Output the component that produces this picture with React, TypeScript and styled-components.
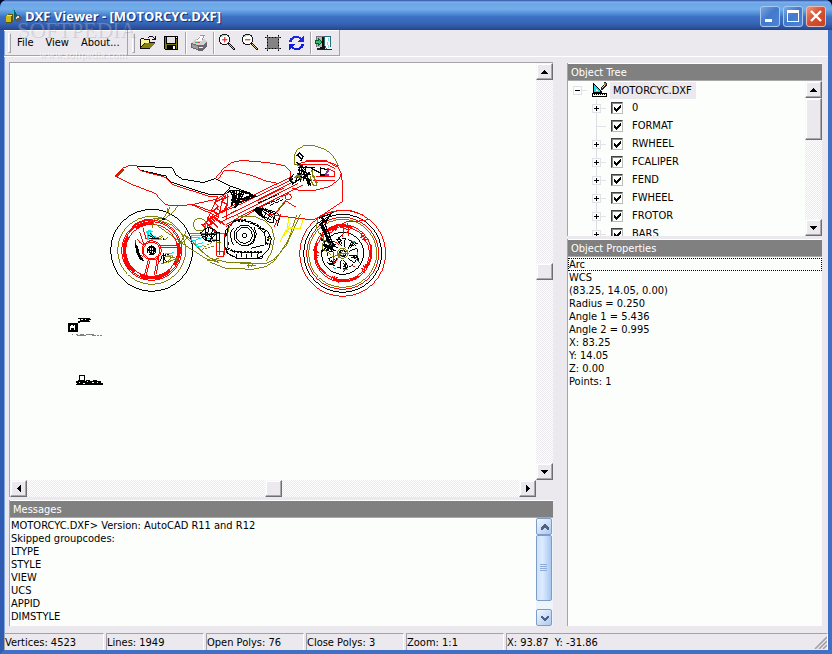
import React from "react";
import styled, { createGlobalStyle, css } from "styled-components";

const FACE = "#ebe9ed";
const PAPER = "#fcfefc";
const SHADOW = "#a5a2a8";

const GlobalStyle = createGlobalStyle`
  * { box-sizing: border-box; }
  body {
    margin: 0;
    background: #04082e;
    color: #000;
    font: 11px/13px "DejaVu Sans Condensed", "DejaVu Sans", sans-serif;
  }
  button { font: inherit; color: inherit; padding: 0; margin: 0; border: 0; background: none; }
  ul { list-style: none; margin: 0; padding: 0; }
  h1, h2 { margin: 0; font: inherit; }
  svg { display: block; flex: none; }
`;

const Window = styled.div`
  position: relative;
  display: flex;
  flex-direction: column;
  height: 100vh;
  min-height: 480px;
  border: 4px solid #3f70c6;
  border-top: 0;
  border-left-color: #2f5bb0;
  border-radius: 7px 7px 0 0;
  background: ${FACE};
  box-shadow: inset 1px 0 #7fa6e2;
`;

const TitleBar = styled.header`
  display: flex;
  align-items: center;
  gap: 3px;
  height: 30px;
  margin: 0 -4px;
  padding: 2px 6px 0 6px;
  flex: none;
  border-radius: 7px 7px 0 0;
  background: linear-gradient(#2a4f9e 0, #7fb0ec 2px, #6ba6e8 4px, #74aeea 9px, #4f8cd6 14px, #3c70c2 17px, #3766b8 23px, #2b509c 28px, #23438c 30px);
`;

const Title = styled.h1`
  flex: 1;
  color: #fff;
  font: bold 13px/18px "Open Sans", "Noto Sans", sans-serif;
  text-shadow: 1px 1px #14306e;
  white-space: nowrap;
`;

const WindowButtons = styled.div`
  display: flex;
  gap: 3px;
`;

const WindowButton = styled.button<{ $close?: boolean }>`
  display: grid;
  place-items: center;
  width: 20px;
  height: 21px;
  border: 1px solid ${(p) => (p.$close ? "#e8bcb4" : "#a9c8ee")};
  border-radius: 3px;
  background: ${(p) =>
    p.$close
      ? "linear-gradient(135deg, #ea9a80, #d85232 45%, #c2421f)"
      : "linear-gradient(135deg, #7aa8e4, #4379cb 45%, #4c84d2)"};
`;

const ToolRow = styled.div`
  display: flex;
  flex: none;
  height: 27px;
  border-bottom: 1px solid #fff;
`;

const Band = styled.div`
  display: flex;
  align-items: center;
  height: 26px;
  padding: 0 1px 0 4px;
  border-right: 1px solid ${SHADOW};
  border-bottom: 1px solid ${SHADOW};
  box-shadow: inset 0 1px #fff;
`;

const Grip = styled.span`
  width: 3px;
  height: 20px;
  border: 1px solid #fff;
  border-right-color: ${SHADOW};
  border-bottom-color: ${SHADOW};
`;

const MenuButton = styled.button`
  height: 22px;
  padding: 0 6px;
  white-space: nowrap;
`;

const Menu = styled.nav`
  display: flex;
`;

const ToolButton = styled.button`
  display: grid;
  place-items: center;
  width: 23px;
  height: 22px;
`;

const ToolGroup = styled.div`
  display: flex;
  padding: 0 2px;
  & + & {
    border-left: 1px solid ${SHADOW};
    box-shadow: inset 1px 0 #fff;
  }
`;

const Workspace = styled.main`
  display: grid;
  grid-template-columns: minmax(0, 1fr) 255px;
  gap: 14px;
  flex: 1;
  min-height: 0;
  padding: 5px 6px 7px 5px;
`;

const LeftColumn = styled.div`
  display: flex;
  flex-direction: column;
  gap: 3px;
  min-height: 0;
`;

const RightColumn = styled.div`
  display: flex;
  flex-direction: column;
  gap: 3px;
  min-height: 0;
  padding-top: 1px;
`;

const Viewport = styled.section`
  display: grid;
  grid-template-columns: minmax(0, 1fr) 17px;
  grid-template-rows: minmax(0, 1fr) 17px;
  flex: 1;
  min-height: 0;
  border-left: 1px solid ${SHADOW};
  border-top: 1px solid ${SHADOW};
`;

const Canvas = styled.div`
  overflow: hidden;
  background: ${PAPER};
`;

const Panel = styled.section<{ $size?: number }>`
  display: flex;
  flex-direction: column;
  min-height: 0;
  flex: ${(p) => (p.$size ? `0 0 ${p.$size}px` : "1")};
  border-left: 1px solid ${SHADOW};
`;

const PanelTitle = styled.h2`
  flex: none;
  height: 18px;
  padding: 0 3px;
  border-top: 1px solid #fff;
  border-bottom: 1px solid #a8a8a8;
  background: #808080;
  color: #fff;
  line-height: 17px;
`;

const PanelBody = styled.div`
  display: flex;
  flex: 1;
  min-height: 0;
  background: ${PAPER};
`;

const Lines = styled.ul`
  flex: 1;
  min-width: 0;
  padding-top: 1px;
  overflow: hidden;
`;

const Line = styled.li<{ $focused?: boolean }>`
  padding: 0 1px;
  line-height: 13px;
  white-space: pre;
  ${(p) => p.$focused && css`outline: 1px dotted #000; outline-offset: -1px;`}
`;

const raised = css`
  border: 1px solid #f8f8fa;
  border-right-color: #6e6e72;
  border-bottom-color: #6e6e72;
  box-shadow: inset -1px -1px #a9a8ad, inset 1px 1px #fff;
  background: ${FACE};
`;

const ScrollTrack = styled.div<{ $across?: boolean }>`
  display: flex;
  flex-direction: ${(p) => (p.$across ? "row" : "column")};
  ${(p) => (p.$across ? "height: 17px;" : "width: 17px;")}
  flex: none;
  min-height: 0;
  background: repeating-conic-gradient(#ebe9ed 0 25%, #fff 0 50%) 0 0 / 2px 2px;
`;

const ScrollButton = styled.button`
  display: grid;
  place-items: center;
  width: 17px;
  height: 17px;
  flex: none;
  ${raised}
`;

const Space = styled.div<{ $grow: number }>`
  flex: ${(p) => p.$grow} 1 0;
`;

const Thumb = styled.div<{ $length?: number }>`
  min-width: 17px;
  height: ${(p) => p.$length ?? 17}px;
  flex: none;
  ${raised}
`;

const LunaTrack = styled.div`
  display: flex;
  flex-direction: column;
  width: 17px;
  flex: none;
  background: #eef4fc;
`;

const LunaButton = styled.button`
  display: grid;
  place-items: center;
  width: 16px;
  height: 17px;
  border: 1px solid #7d9dc8;
  border-radius: 2px;
  background: linear-gradient(135deg, #f0f7ff, #adc8ee);
`;

const LunaThumb = styled.div`
  display: grid;
  place-items: center;
  width: 16px;
  flex: 66 1 0;
  border: 1px solid #7d9dc8;
  border-radius: 2px;
  background: linear-gradient(90deg, #cfe3fa, #dcebff 40%, #a9c6ee);
`;

const Tree = styled.ul`
  flex: 1;
  min-width: 0;
  overflow: hidden;
`;

const TreeRoot = styled.li`
  display: flex;
  align-items: center;
  height: 18px;
  padding-left: 5px;
`;

const TreeItem = styled.li`
  display: flex;
  align-items: center;
  height: 18px;
  padding-left: 24px;
`;

const Expander = styled.button`
  display: block;
  width: 19px;
  height: 18px;
  flex: none;
`;

const RootName = styled.span`
  margin-left: 2px;
  padding: 0 4px 0 3px;
  background: ${FACE};
  line-height: 17px;
`;

const CheckLabel = styled.label`
  display: grid;
  grid-template-columns: 12px auto;
  align-items: center;
  column-gap: 9px;
  line-height: 18px;
`;

const Check = styled.input`
  grid-area: 1 / 1;
  appearance: none;
  width: 12px;
  height: 12px;
  margin: 0;
  border: 1px solid #404040;
  border-right-color: #bbb;
  border-bottom-color: #bbb;
  box-shadow: inset 1px 1px #888;
  background: #fff;
  & + svg { visibility: hidden; grid-area: 1 / 1; pointer-events: none; }
  &:checked + svg { visibility: visible; }
`;

const StatusBar = styled.footer`
  display: grid;
  grid-template-columns: 100px repeat(4, 98px) minmax(0, 1fr);
  gap: 2px;
  flex: none;
  height: 17px;
`;

const StatusCell = styled.div`
  display: flex;
  justify-content: space-between;
  align-items: center;
  border-top: 1px solid ${SHADOW};
  border-left: 1px solid ${SHADOW};
  border-right: 1px solid #fff;
  white-space: pre;
`;

const Watermark = styled.div`
  position: absolute;
  top: 18px;
  left: 13px;
  color: rgba(255, 255, 255, 0.22);
  font: 22px/24px "Liberation Serif", serif;
  text-shadow: 1px 1px rgba(90, 90, 120, 0.2);
  pointer-events: none;
`;

const WatermarkUrl = styled.div`
  padding-left: 22px;
  color: rgba(255, 255, 255, 0.6);
  font: 11px/24px "Liberation Serif", serif;
`;

const Pix = ({ w, h, children }: { w: number; h: number; children: React.ReactNode }) => (
  <svg width={w} height={h} viewBox={`0 0 ${w} ${h}`} shapeRendering="crispEdges" aria-hidden="true">
    {children}
  </svg>
);

const AppIcon = () => (
  <Pix w={16} h={16}>
    <path d="M7 0h1v2h1v2h1v2h1v3h1v2h-2v1H6v-1H4V7h1V4h1V2h1z" fill="#22bfd4" />
    <path d="M8 2h1v2h1v2h1v3h1v2h-2v1H8z" fill="#075e78" />
    <path d="M0 8l2-2h5v7l-1 2H0z" fill="#5e5600" />
    <path d="M0 8h5v6H0z" fill="#d0bc18" />
    <path d="M1 7h5v1H1z" fill="#f4e964" />
    <path d="M11 7h3v1h1v1h1v3h-1v1h-1v1h-4v-1H9V9h1V8h1z" fill="#5a5a5a" />
    <path d="M11 8h2v2h-2v1h-1V9h1z" fill="#ddd" />
  </Pix>
);

const OpenIcon = () => (
  <Pix w={18} h={16}>
    <path d="M1 13V4h1V3h3v1h6v3h5v1h-1v1h-1v1h-1v1h-1v1h-1v2H1z" fill="#111" />
    <path d="M2 4h3v1h5v3H5v1H4v1H3v1H2z" fill="#fff49a" />
    <path d="M3 12v-1h1v-1h1V9h1V8h10v1h-1v1h-1v1h-1v1h-1v1H2v-1z" fill="#858211" />
    <path d="M9 2h1V1h4v1h1v1h1V1h1v4h-4V4h2V3h-1V2h-4v1H9z" fill="#111" />
  </Pix>
);

const SaveIcon = () => (
  <Pix w={16} h={16}>
    <path d="M1 1h14v14H2v-1H1z" fill="#000" />
    <path d="M2 2h1v7h10V4h1v10H2z" fill="#77750b" />
    <path d="M4 2h8v6H4z" fill="#e2e0e5" />
    <path d="M13 2h1v1h-1z" fill="#fff" />
    <path d="M4 10h9v4H4z" fill="#000" />
    <path d="M10 11h2v3h-2z" fill="#fff" />
  </Pix>
);

const PrintIcon = () => (
  <Pix w={18} h={17}>
    <path d="M1 9l5-4h8l3 2v5l-4 4H8l-7-3z" fill="#9d9da0" />
    <path d="M1 9l5-4h8l3 2-4 4H8z" fill="#d1d1d5" />
    <path d="M8 11h5l4-4v5l-4 4H8z" fill="#69696f" />
    <path d="M7 5l3-4h5v1l-3 5H6z" fill="#fff" />
    <path d="M7 5h1V4h1V3h1V1h5v1h-1v2h-1v2h-1V4h1V2h-3v2H9v1H8v1H7z" fill="#97979c" />
    <path d="M9 13h4v1H9z" fill="#eee" />
    <path d="M1 9l7 3v4l-7-3zM8 16h5" fill="none" stroke="#666" />
    <path d="M5 8h3v1H5z" fill="#3cb848" />
    <path d="M8 8h2v1H8z" fill="#ef4428" />
  </Pix>
);

const ZoomIcon = ({ plus }: { plus?: boolean }) => (
  <Pix w={18} h={17}>
    <path d="M4 0h5v1h2v2h1v5h-1v2H9v1H4v-1H2V8H1V3h1V1h2z" fill="#171717" />
    <path d="M4 1h5v1h1v1h1v5h-1v1H9v1H4V9H3V8H2V3h1V2h1z" fill="#fff" />
    <path d="M4 1h4v1H5v1H3V2h1z" fill="#a9dce7" />
    <path d={plus ? "M6 3h1v2h2v1H7v2H6V6H4V5h2z" : "M4 5h5v1H4z"} fill="#e92424" stroke="#f46a6a" strokeWidth="0.5" />
    <path d="M10 9h2v1h1v1h1v1h1v1h1v1h1v2h-2v-1h-1v-1h-1v-1h-1v-1h-1v-1h-1z" fill="#111" />
    <path d="M11 10h1v1h1v1h1v1h1v1h1v1h-1v-1h-1v-1h-1v-1h-1v-1h-1z" fill="#ddc873" />
  </Pix>
);

const ExtentsIcon = () => (
  <Pix w={16} h={16}>
    <path d="M3 3h10v10H3z" fill="#848484" />
    <path d="M2 1h1v1h10V1h1v1h1v1h-1v10h1v1h-1v1h-1v-1H3v1H2v-1H1v-1h1V3H1V2h1z M3 3v10h10V3z" fill="#555" fillRule="evenodd" />
    <path d="M2 0h1v1H2zM13 0h1v1h-1zM0 2h1v1H0zM15 2h1v1h-1zM0 13h1v1H0zM15 13h1v1h-1zM2 15h1v1H2zM13 15h1v1h-1zM4 2h1v1H4zM7 2h1v1H7zM10 2h1v1h-1zM4 13h1v1H4zM7 13h1v1H7zM10 13h1v1h-1zM2 4h1v1H2zM2 7h1v1H2zM2 10h1v1H2zM13 4h1v1h-1zM13 7h1v1h-1zM13 10h1v1h-1z" fill="#000" />
  </Pix>
);

const RefreshIcon = () => (
  <Pix w={17} h={16}>
    <path d="M1 7V5h1V3h2V2h1V1h6v1h2v1h1V2h1V1h1v6h-6V6h1V5h1V4h-1V3H6v1H5v1H4v2z" fill="#1b27e2" />
    <path d="M16 9v2h-1v2h-2v1h-1v1H6v-1H4v-1H3v1H2v1H1V9h6v1H6v1H5v1h1v1h5v-1h1v-1h1V9z" fill="#111bda" />
  </Pix>
);

const ExitIcon = () => (
  <Pix w={18} h={16}>
    <path d="M1 1h10v1H2v10H1z" fill="#77747a" />
    <path d="M2 2h7v10H2z" fill="#b9b7bd" />
    <path d="M7 2h3v12H5v-2h2z" fill="#111" />
    <path d="M10 1h5v11l1 2h-4l-2-3z" fill="#fff" />
    <path d="M9 1h7v1H9zM15 2h1v10h-1zM9 2h1v9H9zM10 11h1v2h-1zM11 13h1v1h-1z" fill="#286c76" />
    <path d="M13 3h1v3h-1zM12 7h1v3h-1zM13 10h1v3h-1z" fill="#76e2ee" />
    <path d="M0 5h3V3h1v1h1v1h1v1h1v2H6v1H5v1H4v1H3V9H0z" fill="#085c31" />
    <path d="M1 6h3V5h1v1h1v2H5v1H4V8H1z" fill="#24c85c" />
    <path d="M2 13h3v1h12v1H2z" fill="#222" />
  </Pix>
);

const DraftIcon = () => (
  <Pix w={16} h={16}>
    <path d="M1 1h1v1h1v1h1v1h1v1h1v1h1v1h1v1h1v1h1v2H1z" fill="#000" />
    <path d="M2 3h1v1h1v1h1v1h1v1h1v1h1v2H2z" fill="#18dce8" />
    <path d="M4 7h1v1h1v1H4z" fill="#fff" />
    <path d="M0 11h15v4H0z" fill="#000" />
    <path d="M1 12h13v2H1z" fill="#fff" />
    <path d="M2 12h1v1H2zM4 12h1v1H4zM6 12h1v1H6zM8 12h1v1H8zM10 12h1v1h-1zM12 12h1v1h-1z" fill="#000" />
    <path d="M8 8h1V5h1V4h1V3h1V0h2v1h1v3h-1v1h-1v1h-1v1h-1v1H8z" fill="#222" />
    <path d="M10 6V5h1V4h1V3h1v1h-1v1h-1v1z" fill="#f5e63c" />
    <path d="M12 1h2v2h-2z" fill="#a57b52" />
  </Pix>
);

const ARROWS = {
  up: "M3 0h1v1h1v1h1v1h1v1H0V3h1V2h1V1h1z",
  down: "M0 0h7v1H6v1H5v1H4v1H3V3H2V2H1V1H0z",
  left: "M4 0v7H3V6H2V5H1V4H0V3h1V2h1V1h1V0z",
  right: "M0 0h1v1h1v1h1v1h1v1H3v1H2v1H1v1H0z",
};

const Arrow = ({ to }: { to: keyof typeof ARROWS }) => {
  const vertical = to === "up" || to === "down";
  return (
    <Pix w={vertical ? 7 : 4} h={vertical ? 4 : 7}>
      <path d={ARROWS[to]} />
    </Pix>
  );
};

const TreeMark = ({ kind }: { kind: "plus" | "minus" | "none" }) => (
  <Pix w={19} h={18}>
    {kind !== "minus" && <path d="M4 0h1v18H4z" fill="#dddde4" />}
    <path d="M5 9h9v1H5z" fill="#e3e2e9" />
    {kind !== "none" && <path d="M0 5h9v9H0z" fill="#e2e1e8" />}
    {kind !== "none" && <path d="M1 6h7v7H1z" fill={PAPER} />}
    {kind !== "none" && <path d="M2 9h5v1H2z" />}
    {kind === "plus" && <path d="M4 7h1v5H4z" />}
  </Pix>
);

const RED = "#fd0404";
const OLIVE = "#80800a";
const INK = "#000";

const ring = (cx: number, cy: number, radii: number[], color: string, width = 3) =>
  radii.map((r) => <circle key={`${color}${r}`} cx={cx} cy={cy} r={r} stroke={color} strokeWidth={width} />);

const Blade = ({ cx, cy, turns, d, color, width = 3 }: { cx: number; cy: number; turns: number[]; d: string; color: string; width?: number }) => (
  <>
    {turns.map((t) => (
      <path key={t} d={d} stroke={color} strokeWidth={width} transform={`translate(${cx} ${cy}) rotate(${t})`} />
    ))}
  </>
);

/* One drawing unit in the nested group is a third of a screen pixel. */
const Drawing = () => (
  <svg width="527" height="417" viewBox="10 63 527 417" shapeRendering="crispEdges" fill="none" role="img" aria-label="Motorcycle wireframe">
    <g transform="translate(100 140) scale(0.33333)" strokeWidth="3">
      {ring(155, 331, [123], INK)}
      {ring(155, 331, [102], OLIVE)}
      {ring(155, 331, [90, 86, 78], RED)}
      <path d="M84 290A82 82 0 0 0 103 394M107 264Q125 248 160 249M120 405Q165 428 210 392M234 310Q243 345 222 375" stroke={RED} strokeWidth="9" />
      <path d="M76 300l-6 30 5 34 14 28M88 275l18 -22 26 -12 28 -2M134 408l-2 12M176 405l3 11M107 390l-9 9" stroke={RED} strokeWidth="5" />
      {ring(155, 331, [29, 25], RED)}
      {ring(155, 331, [9, 13], INK)}
      <path d="M149 322v18h12v-18M155 316v30M144 331h22" stroke={INK} />
      <path d="M105 300l3 20 12 25 9 5M110 296l10 12 12 7M129 264l9 32 13 6M119 275l12 37M181 318l60 0M181 323l60 0M145 360l-12 46M150 362l-12 46M172 355l-9 50M177 352l-8 50" stroke={RED} />
      <path d="M107 310l3 26 11 22 9 3M112 318l3 20 15 25" stroke={INK} strokeWidth="4" />
      <path d="M137 278l10 -6 11 4M141 295l46 4M146 272l-3 27M150 277l10 17 24 2M150 288l22 5" stroke="#00e8e8" strokeWidth="5" />
      <path d="M145 285l16 10M151 280l14 15M147 297l37 -2M190 299v-5M184 349l15 -5 -7 14 8 6M190 340v28M178 365l9 -15M200 340l10 9" stroke={INK} />
      <path d="M172 293l14 -6M175 298l14 -8M193 300l12 -8M205 367l30 -15M210 355l10 -8M184 372l50 -17M195 348l30 5 7 12M201 366l18 -16" stroke={OLIVE} />
      <path d="M196 342l26 -4M202 348l16 -3" stroke="#00e8e8" />

      <path d="M110 76H90L70 84 46 108 100 135 165 160 195 192 215 198 235 197 275 194 352 177 382 158" stroke={RED} />
      <path d="M48 107L70 86 69 92 54 109z" fill="#99540c" stroke={RED} />
      <path d="M112 79l53 2 51 2 12 21 19 13 63 11 35 -12 46 22M119 90l78 18 15 18 117 38 42 0 20 -23M391 138l61 22" stroke={INK} />
      <path d="M112 83l10 9 75 20 19 21 111 36 28 2M344 118l26 -32 24 -18 31 -7 80 7 50 9 15 15 3 23 7 18M355 117l17 -25 26 -1 62 17 40 16 35 6" stroke={RED} />

      <path d="M275 194l78 36M280 194l75 27M352 171l-37 85M370 168l-17 70M382 161l-2 78M350 280v62M360 283v61M373 281v63M350 336h22v13h-22z" stroke={RED} />
      <path d="M353 173l-8 16 10 10 -15 13 10 12 -18 14 6 12 -18 10M377 166l-10 20 15 7 -10 20M322 232l13 22M305 252l14 15M330 228l15 18M365 180l22 -12M351 206l18 12M344 187l22 -10M308 257l32 -31M344 233l31 22M315 245l31 31M326 235l28 28M336 227l26 23" stroke={RED} strokeWidth="4" />
      <path d="M347 225L420 193 570 122M358 248L420 219 595 130M365 234L420 207 578 126M377 255L420 230 610 135M362 215L570 112M378 260L535 172 565 163M394 219L551 144" stroke={RED} />
      <path d="M381 159l14 -8 17 0 55 17M389 151l10 19 -4 28M402 151v38M410 149l-5 55M418 157l-8 43M426 155l-16 38M432 160l-16 25M393 179l24 14M395 154l30 16M405 193l62 -24 -38 -14M403 186l50 -20M425 180l38 -14" stroke={INK} strokeWidth="4" />
      <path d="M459 212l21 -8 45 11 16 13 -10 30M467 202l62 20M475 203l42 31M489 202l-10 23M501 206l-9 27M514 211l-11 30M526 219l-7 27M464 213l42 33 15 3M477 226l37 13M495 205l34 37" stroke={INK} />
      <path d="M465 206l24 24M471 204l17 23M483 205l-9 14" stroke={INK} strokeWidth="6" />
      <path d="M510 196l46 -20M499 193l42 -17M475 188l61 -25" stroke={INK} strokeDasharray="12 4" />
      <path d="M530 218l26 -36 33 20M537 209l22 -27M522 260l22 -39" stroke={RED} />
      <path d="M529 216l26 -34" stroke={OLIVE} />

      <path d="M583 75l0 -29 9 -18 18 -10 30 -2 38 13 22 20 16 29" stroke={OLIVE} />
      <path d="M585 75l32 -10 68 1 26 10 13 25 -8 18 -28 21 -45 11 -46 0 -20 -7M590 75h93l22 10M618 62h60l34 20M724 99l4 40v45l-33 22 -32 21 -23 13 -60 -7 -39 -5 -40 -6M640 121h64M647 111h55l2 -15 -22 -11M594 150l30 3" stroke={RED} />
      <path d="M590 49l9 -10 10 10 -7 15M593 47l12 10M588 66l24 20M593 82l53 0M598 78v38M606 76l-4 49M618 78l-8 46M590 99l35 8M581 103l-13 14 10 14 22 -14M596 102l-10 23M615 88l11 32 6 18M607 88l20 48M628 97l-15 20M595 90l37 13M600 109l32 12M568 123l11 -7M661 82v23h20M665 84l15 6M634 85l25 13" stroke={INK} strokeWidth="4" />
      <path d="M590 72l10 8 M591 102l14 17M636 91l3 18 13 21M641 106l10 31M588 106l16 10M582 113l24 -8M630 110l8 24 10 3" stroke={OLIVE} strokeWidth="4" />
      <path d="M685 88l-8 17 10 -1M678 98l8 -4" stroke="#8c2ba8" strokeWidth="5" />
      <circle cx="565" cy="170" r="9" stroke={RED} />

      <path d="M210 202l-21 35 -28 -3 -17 18M235 198l-27 29M201 204l7 21 -16 14M165 235l50 20 49 42 61 55M164 251l90 64 72 46M259 272l-18 40M157 263l6 -29M263 291l-20 22M251 280l79 75 57 13 63 1 50 1 22 -11 37 -43 43 -95M330 366l43 18 84 4 40 -8 27 -18 41 -62 25 -75M420 371h53M331 354l26 14 -36 -11M321 363l37 -8M441 376h27M446 371v12M458 373l-3 8" stroke={OLIVE} />
      <circle cx="299" cy="254" r="19" stroke={OLIVE} />
      <path d="M267 280h110M391 259l17 -19 22 0M412 228l50 1 33 14 20 20 8 31 -8 41 -16 28" stroke={OLIVE} />
      <path d="M187 237h8" stroke={INK} strokeWidth="7" />
      <path d="M275 288h36M275 286v14l12 2 2 18 24 -3M287 300l20 -8 45 9M288 314l20 -6M275 292h24" stroke="#00e8e8" />
      <path d="M301 279l23 -18 24 11 2 28 -22 5 -18 -9zM316 263v39M327 260l-8 40M338 263l-7 42M302 284h47M307 292l42 -16M350 278h9v25h-20M324 304l26 -22M315 273l24 25" stroke={INK} />
      <path d="M313 320l27 -15 22 4M305 328l38 -10" stroke={OLIVE} strokeDasharray="7 3" />
      {ring(433, 286, [24, 31], INK)}
      {ring(433, 286, [7], INK)}
      <path d="M400 246l17 -7 33 6 18 12 34 16 12 23 -8 31 -20 22 -19 6 -54 0 -32 -16 -9 -27 6 -41zM388 252l-8 31 5 27 -6 22 12 14 20 8M400 264l-9 16 3 22 8 14M462 262l7 21 -9 26 -19 9M452 325l41 -10M474 263l20 16 4 35M409 343l0 12 76 0 6 -14M425 339v12M441 341v14M454 340v12M475 338l-4 16M396 335l90 4" stroke={INK} />
      <path d="M403 244l32 -3 36 14 28 20M383 326l24 10 85 -1M506 288l-5 28" stroke={INK} strokeWidth="6" strokeDasharray="6 4" />
      <path d="M382 278v42M389 258l-5 17M503 309l14 7M505 294l8 2" stroke={OLIVE} />
      <path d="M566 235l-4 29 -22 41M610 238l-10 29 -30 -4 -19 25M571 250l-14 24 18 4M560 264l22 3" stroke="#f4f000" />

      {ring(728, 340, [129, 108], RED)}
      {ring(728, 340, [117], INK)}
      {ring(728, 340, [102], OLIVE)}
      {ring(728, 340, [86, 80], RED)}
      <path d="M650 310A84 84 0 0 0 675 400M678 272A84 84 0 0 1 753 260M811 313A84 84 0 0 1 800 382M700 418A84 84 0 0 0 776 410" stroke={RED} strokeWidth="6" />
      {ring(728, 340, [63], INK)}
      <circle cx="728" cy="340" r="45" stroke={INK} strokeDasharray="12 7" />
      {ring(728, 340, [15], OLIVE)}
      {ring(728, 340, [9], INK, 4)}
      <Blade cx={728} cy={340} turns={[0, 60, 120, 180, 240, 300]} d="M19 -6l22 -9M20 8l20 -2 8 13M24 -16l10 -16 13 4" color={INK} />
      <Blade cx={728} cy={340} turns={[18, 78, 138, 198, 258, 318]} d="M32 -5l9 10M42 -7l7 8" color={INK} width={5} />
      <Blade cx={728} cy={340} turns={[35, 107, 179, 251, 323]} d="M76 -10l11 -5M75 7l13 5M71 -5l16 1M71 4l16 -1" color={RED} width={4} />
      <path d="M743 250l3 39M733 251l-5 40M718 260l29 10M756 260l-18 20" stroke={RED} />
      <path d="M690 219l30 -8 33 1 34 12 19 15 -28 4 -39 3 -23 10 -21 21 -29 7M779 235l15 10" stroke={RED} />
      <path d="M656 235l37 -14 -13 19 -20 13 12 16 11 21 9 26M672 233l-7 30 20 39M689 225l-14 29 12 27 12 33M664 245l16 35M658 231l23 13M660 281l19 41 -13 13M671 275l24 54M683 288l15 38M663 300l44 14M666 317l42 3M675 333l27 -20" stroke={INK} strokeWidth="4" />
      <path d="M653 236l-4 29 16 25M672 284l-5 42 27 18M661 291l29 22M697 350l34 -10M708 363l29 -42M719 355l25 -25M712 341h35" stroke={OLIVE} />
      <path d="M702 337v32M710 360l-11 16M765 303l-12 13M766 354l12 14M752 375l12 6M702 303l16 11" stroke={RED} />
      <path d="M692 318l4 -8M754 301l10 7M773 335v13M744 388l-16 2M700 383l8 4" stroke="#18a7a0" />
    </g>
    <g>
      <path d="M68 323h10v9H68zM70 325v5h1v-2h3v2h1v-5h-1v1h-1v-1h-2v1h-1z" fill="#000" fillRule="evenodd" />
      <path d="M77 323h1v-2h2v-2h-2v-1h12v1h1v1h-2v1h1v1H80v1h-2v1h-1zM81 319v1h2v-1zM85 319v1h1v-1z" fill="#000" fillRule="evenodd" />
      <path d="M72 334h1v1h3v-1h2v1h2v-1h4v1h2v-1h8v1h2v1h-4v-1h-6v1h-9v-1h-5zM97 335h2v1h-2zM100 335h2v1h-2z" fill="#808080" />
      <circle cx="82" cy="378" r="3" stroke="#000" />
      <path d="M76 381h2v-1h5v1h3v-1h4v1h3v-1h4v1h4v2h2v2H76v-1h1v-1h-1zM79 382v1h1v-1zM83 383v1h2v-1zM87 381v1h1v-1zM92 382v1h2v-1zM97 382v1h1v-1z" fill="#000" fillRule="evenodd" />
    </g>
  </svg>
);

const VScroll = ({ before, after, thumb }: { before: number; after: number; thumb?: number }) => (
  <ScrollTrack>
    <ScrollButton aria-label="Scroll up"><Arrow to="up" /></ScrollButton>
    <Space $grow={before} />
    <Thumb $length={thumb} />
    <Space $grow={after} />
    <ScrollButton aria-label="Scroll down"><Arrow to="down" /></ScrollButton>
  </ScrollTrack>
);

const LAYERS = ["0", "FORMAT", "RWHEEL", "FCALIPER", "FEND", "FWHEEL", "FROTOR", "BARS"];
const MESSAGES = ["MOTORCYC.DXF> Version: AutoCAD R11 and R12", "Skipped groupcodes:", "LTYPE", "STYLE", "VIEW", "UCS", "APPID", "DIMSTYLE"];
const PROPERTIES = ["Arc", "WCS", "(83.25, 14.05, 0.00)", "Radius = 0.250", "Angle 1 = 5.436", "Angle 2 = 0.995", "X: 83.25", "Y: 14.05", "Z: 0.00", "Points: 1"];
const STATUS = ["Vertices: 4523", "Lines: 1949", "Open Polys: 76", "Close Polys: 3", "Zoom: 1:1"];

export default function App() {
  return (
    <>
      <GlobalStyle />
      <Window>
        <TitleBar>
          <AppIcon />
          <Title>DXF Viewer - [MOTORCYC.DXF]</Title>
          <WindowButtons>
            <WindowButton aria-label="Minimize"><Pix w={14} h={14}><path d="M2 10h7v3H2z" fill="#fff" /></Pix></WindowButton>
            <WindowButton aria-label="Maximize"><Pix w={14} h={14}><path d="M1 1h12v12H1zM2 4v8h10V4z" fill="#fff" fillRule="evenodd" /></Pix></WindowButton>
            <WindowButton $close aria-label="Close">
              <svg width="14" height="14" viewBox="0 0 14 14" aria-hidden="true"><path d="M2 2l10 10M12 2L2 12" stroke="#fff" strokeWidth="2.4" /></svg>
            </WindowButton>
          </WindowButtons>
        </TitleBar>

        <ToolRow>
          <Band>
            <Grip />
            <Menu>
              {["File", "View", "About..."].map((m) => <MenuButton key={m}>{m}</MenuButton>)}
            </Menu>
          </Band>
          <Band>
            <Grip />
            <ToolGroup>
              <ToolButton aria-label="Open"><OpenIcon /></ToolButton>
              <ToolButton aria-label="Save"><SaveIcon /></ToolButton>
            </ToolGroup>
            <ToolGroup>
              <ToolButton aria-label="Print"><PrintIcon /></ToolButton>
            </ToolGroup>
            <ToolGroup>
              <ToolButton aria-label="Zoom in"><ZoomIcon plus /></ToolButton>
              <ToolButton aria-label="Zoom out"><ZoomIcon /></ToolButton>
              <ToolButton aria-label="Zoom extents"><ExtentsIcon /></ToolButton>
              <ToolButton aria-label="Refresh"><RefreshIcon /></ToolButton>
            </ToolGroup>
            <ToolGroup>
              <ToolButton aria-label="Exit"><ExitIcon /></ToolButton>
            </ToolGroup>
          </Band>
        </ToolRow>

        <Workspace>
          <LeftColumn>
            <Viewport>
              <Canvas><Drawing /></Canvas>
              <VScroll before={183} after={183} />
              <ScrollTrack $across>
                <ScrollButton aria-label="Scroll left"><Arrow to="left" /></ScrollButton>
                <Space $grow={238} />
                <Thumb />
                <Space $grow={238} />
                <ScrollButton aria-label="Scroll right"><Arrow to="right" /></ScrollButton>
              </ScrollTrack>
            </Viewport>
            <Panel $size={126}>
              <PanelTitle>Messages</PanelTitle>
              <PanelBody>
                <Lines>{MESSAGES.map((m) => <Line key={m}>{m}</Line>)}</Lines>
                <LunaTrack>
                  <LunaButton aria-label="Scroll up"><Pix w={9} h={6}><path d="M4 0h1v1h1v1h1v1h1v2H7V4H6V3H5V2H4v1H3v1H2v1H1V3h1V2h1V1h1z" fill="#4d6185" stroke="#4d6185" /></Pix></LunaButton>
                  <LunaThumb><Pix w={8} h={8}><path d="M0 0h7v1H0zM0 2h7v1H0zM0 4h7v1H0zM0 6h7v1H0z" fill="#8fabd8" /></Pix></LunaThumb>
                  <Space $grow={8} />
                  <LunaButton aria-label="Scroll down"><Pix w={9} h={6}><path d="M1 1h1v1h1v1h1v1h1V3h1V2h1V1h1v1H7v1H6v1H5v1H4V4H3V3H2V2H1z" fill="#4d6185" stroke="#4d6185" /></Pix></LunaButton>
                </LunaTrack>
              </PanelBody>
            </Panel>
          </LeftColumn>

          <RightColumn>
            <Panel $size={173}>
              <PanelTitle>Object Tree</PanelTitle>
              <PanelBody>
                <Tree>
                  <TreeRoot>
                    <Expander aria-label="Collapse MOTORCYC.DXF"><TreeMark kind="minus" /></Expander>
                    <DraftIcon />
                    <RootName>MOTORCYC.DXF</RootName>
                  </TreeRoot>
                  {LAYERS.map((name) => (
                    <TreeItem key={name}>
                      {name === "FORMAT"
                        ? <TreeMark kind="none" />
                        : <Expander aria-label={`Expand ${name}`}><TreeMark kind="plus" /></Expander>}
                      <CheckLabel>
                        <Check type="checkbox" defaultChecked />
                        <Pix w={12} h={12}><path d="M3 5h1v1h1v1h1V6h1V5h1V4h1V3h1v3H9v1H8v1H7v1H6v1H5V9H4V8H3z" /></Pix>
                        {name}
                      </CheckLabel>
                    </TreeItem>
                  ))}
                </Tree>
                <VScroll before={0} after={79} thumb={42} />
              </PanelBody>
            </Panel>
            <Panel>
              <PanelTitle>Object Properties</PanelTitle>
              <PanelBody>
                <Lines>{PROPERTIES.map((p) => <Line key={p} $focused={p === "Arc"}>{p}</Line>)}</Lines>
              </PanelBody>
            </Panel>
          </RightColumn>
        </Workspace>

        <StatusBar>
          {STATUS.map((s) => <StatusCell key={s}>{s}</StatusCell>)}
          <StatusCell>
            {"X: 93.87  Y: -31.86"}
            <svg width="13" height="13" viewBox="0 0 13 13" aria-hidden="true">
              <path d="M1 13L13 1M5 13l8 -8M9 13l4 -4" stroke="#a3a1a8" strokeWidth="1.6" />
            </svg>
          </StatusCell>
        </StatusBar>
        <Watermark aria-hidden="true">
          SOFTPEDIA
          <WatermarkUrl>www.softpedia.com</WatermarkUrl>
        </Watermark>
      </Window>
    </>
  );
}
